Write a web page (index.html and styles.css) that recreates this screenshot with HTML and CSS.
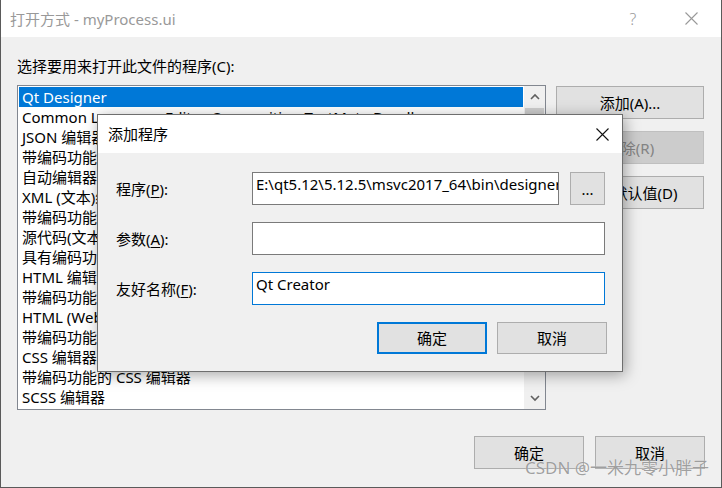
FILE: index.html
```html
<!DOCTYPE html>
<html lang="zh-CN">
<head>
<meta charset="utf-8">
<title>打开方式 - myProcess.ui</title>
<link rel="stylesheet" href="styles.css">
</head>
<body>
<div class="window">
  <div class="titlebar">
    <span class="title">打开方式 - myProcess.ui</span>
    <span class="cap help">?</span>
    <span class="cap close">
      <svg width="13" height="13" viewBox="0 0 13 13"><path d="M0.5 0.5 L12.5 12.5 M12.5 0.5 L0.5 12.5" stroke="#999" stroke-width="1.1" fill="none"/></svg>
    </span>
  </div>
  <div class="content">
    <div class="prompt">选择要用来打开此文件的程序(C):</div>
    <div class="main-row">
      <div class="listbox">
        <div class="items">
          <div class="item selected">Qt Designer</div>
          <div class="item">Common Language Editor Composition TextMate Bundle</div>
          <div class="item">JSON 编辑器</div>
          <div class="item">带编码功能的 JSON 编辑器</div>
          <div class="item">自动编辑器选择器 (XML)</div>
          <div class="item">XML (文本)编辑器</div>
          <div class="item">带编码功能的 XML (文本)编辑器</div>
          <div class="item">源代码(文本)编辑器</div>
          <div class="item">具有编码功能的源代码(文本)编辑器</div>
          <div class="item">HTML 编辑器</div>
          <div class="item">带编码功能的 HTML 编辑器</div>
          <div class="item">HTML (Web 窗体)编辑器</div>
          <div class="item">带编码功能的 HTML (Web 窗体)编辑器</div>
          <div class="item">CSS 编辑器</div>
          <div class="item">带编码功能的 CSS 编辑器</div>
          <div class="item">SCSS 编辑器</div>
        </div>
        <div class="scrollbar">
          <div class="sb-btn">
            <svg width="10" height="7" viewBox="0 0 10 7"><polyline points="1,6 5,2 9,6" stroke="#606060" stroke-width="1.6" fill="none"/></svg>
          </div>
          <div class="sb-track"><div class="sb-thumb"></div></div>
          <div class="sb-btn">
            <svg width="10" height="7" viewBox="0 0 10 7"><polyline points="1,1 5,5 9,1" stroke="#606060" stroke-width="1.6" fill="none"/></svg>
          </div>
        </div>
      </div>
      <div class="side-buttons">
        <button class="btn side">添加(A)...</button>
        <button class="btn side" disabled>删除(R)</button>
        <button class="btn side">设为默认值(D)</button>
      </div>
    </div>
    <div class="footer">
      <button class="btn foot">确定</button>
      <button class="btn foot">取消</button>
    </div>
  </div>

  <div class="dialog">
    <div class="d-titlebar">
      <span class="d-title">添加程序</span>
      <span class="d-close">
        <svg width="13" height="13" viewBox="0 0 13 13"><path d="M0.5 0.5 L12.5 12.5 M12.5 0.5 L0.5 12.5" stroke="#111" stroke-width="1.1" fill="none"/></svg>
      </span>
    </div>
    <div class="d-body">
      <div class="d-grid">
        <label class="d-label">程序(<u>P</u>):</label>
        <div class="field">E:\qt5.12\5.12.5\msvc2017_64\bin\designer.exe</div>
        <button class="btn browse">...</button>

        <label class="d-label">参数(<u>A</u>):</label>
        <div class="field wide"></div>

        <label class="d-label">友好名称(<u>F</u>):</label>
        <div class="field wide focused">Qt Creator</div>
      </div>
      <div class="d-buttons">
        <button class="btn dbtn default">确定</button>
        <button class="btn dbtn">取消</button>
      </div>
    </div>
  </div>

  <div class="watermark">CSDN @一米九零小胖子</div>
</div>
</body>
</html>
```

FILE: styles.css
```css
* {
  box-sizing: border-box;
}

html, body {
  margin: 0;
  padding: 0;
  background: #f0f0f0;
}

body {
  font-family: "Noto Sans", "Noto Sans CJK SC", sans-serif;
  font-size: 15px;
  line-height: 20px;
  color: #000;
}

.window {
  position: relative;
  width: 722px;
  height: 488px;
  background: #f0f0f0;
  border-left: 1px solid #5a5a5a;
  border-right: 1px solid #5a5a5a;
  border-bottom: 1px solid #5a5a5a;
  overflow: hidden;
}

.titlebar {
  height: 37px;
  background: #fff;
  display: flex;
  align-items: center;
  padding-left: 9px;
  padding-right: 1px;
}

.title {
  color: #999;
  font-size: 15px;
  line-height: 20px;
  flex: 1;
  white-space: nowrap;
}

.cap {
  width: 58px;
  height: 37px;
  display: flex;
  align-items: center;
  justify-content: center;
}

.help {
  color: #9a9a9a;
  font-size: 16px;
  font-weight: 300;
  font-family: "Noto Sans", sans-serif;
}

.content {
  padding: 0 16px;
}

.prompt {
  margin-top: 19px;
  line-height: 20px;
  white-space: nowrap;
}

.main-row {
  display: flex;
  align-items: flex-start;
  margin-top: 9px;
}

.listbox {
  width: 529px;
  height: 325px;
  border: 1px solid #828790;
  background: #fff;
  display: flex;
}

.items {
  flex: 1;
  padding: 1px;
  overflow: hidden;
}

.item {
  height: 20px;
  line-height: 20px;
  padding-left: 3px;
  white-space: nowrap;
}

.item.selected {
  background: #0078d7;
  color: #fff;
}

.scrollbar {
  width: 21px;
  background: #f0f0f0;
  display: flex;
  flex-direction: column;
}

.sb-btn {
  height: 21px;
  display: flex;
  align-items: center;
  justify-content: center;
}

.sb-track {
  flex: 1;
  padding: 1px 1px 0 1px;
}

.sb-thumb {
  height: 150px;
  background: #cdcdcd;
}

.side-buttons {
  display: flex;
  flex-direction: column;
  gap: 12px;
  margin-left: 10px;
  padding-top: 1px;
}

.btn {
  font-family: "Noto Sans", "Noto Sans CJK SC", sans-serif;
  font-size: 15px;
  line-height: 20px;
  color: #000;
  background: #e1e1e1;
  border: 1px solid #adadad;
  padding: 0;
  margin: 0;
  white-space: nowrap;
}

.btn.side {
  width: 148px;
  height: 33px;
}

.btn:disabled {
  background: #cccccc;
  border-color: #bfbfbf;
  color: #838383;
}

.footer {
  display: flex;
  justify-content: flex-end;
  gap: 11px;
  margin-top: 26px;
}

.btn.foot {
  width: 110px;
  height: 33px;
}

/* dialog */
.dialog {
  position: absolute;
  left: 96px;
  top: 114px;
  width: 526px;
  background: #f0f0f0;
  border: 1px solid #6e6e6e;
  box-shadow: 2px 3px 14px rgba(0, 0, 0, 0.35);
}

.d-titlebar {
  height: 38px;
  background: #fff;
  display: flex;
  align-items: center;
  padding-left: 10px;
}

.d-title {
  flex: 1;
  line-height: 20px;
}

.d-close {
  width: 40px;
  height: 38px;
  display: flex;
  align-items: center;
  justify-content: center;
}

.d-body {
  padding: 19px 17px 17px 18px;
}

.d-grid {
  display: grid;
  grid-template-columns: 125px 307px 35px;
  grid-auto-rows: 33px;
  column-gap: 11px;
  row-gap: 17px;
  align-items: center;
}

.d-label {
  white-space: nowrap;
  line-height: 20px;
}

.d-label u {
  text-underline-offset: 2px;
}

.field {
  height: 33px;
  background: #fff;
  border: 1px solid #7a7a7a;
  padding: 1px 3px 0 3px;
  line-height: 20px;
  white-space: nowrap;
  overflow: hidden;
}

.field.wide {
  grid-column: 2 / 4;
}

.field.focused {
  border-color: #0078d7;
}

.btn.browse {
  width: 35px;
  height: 33px;
  line-height: 16px;
}

.d-buttons {
  display: flex;
  justify-content: flex-end;
  gap: 10px;
  margin-top: 17px;
  margin-right: -2px;
}

.btn.dbtn {
  width: 110px;
  height: 32px;
}

.btn.default {
  border: 2px solid #0078d7;
}

.watermark {
  position: absolute;
  left: 524px;
  top: 458px;
  font-size: 17px;
  line-height: 20px;
  letter-spacing: 0;
  color: rgba(125, 125, 125, 0.72);
  text-shadow: 0 0 1px rgba(255, 255, 255, 0.8);
  white-space: nowrap;
}
```
